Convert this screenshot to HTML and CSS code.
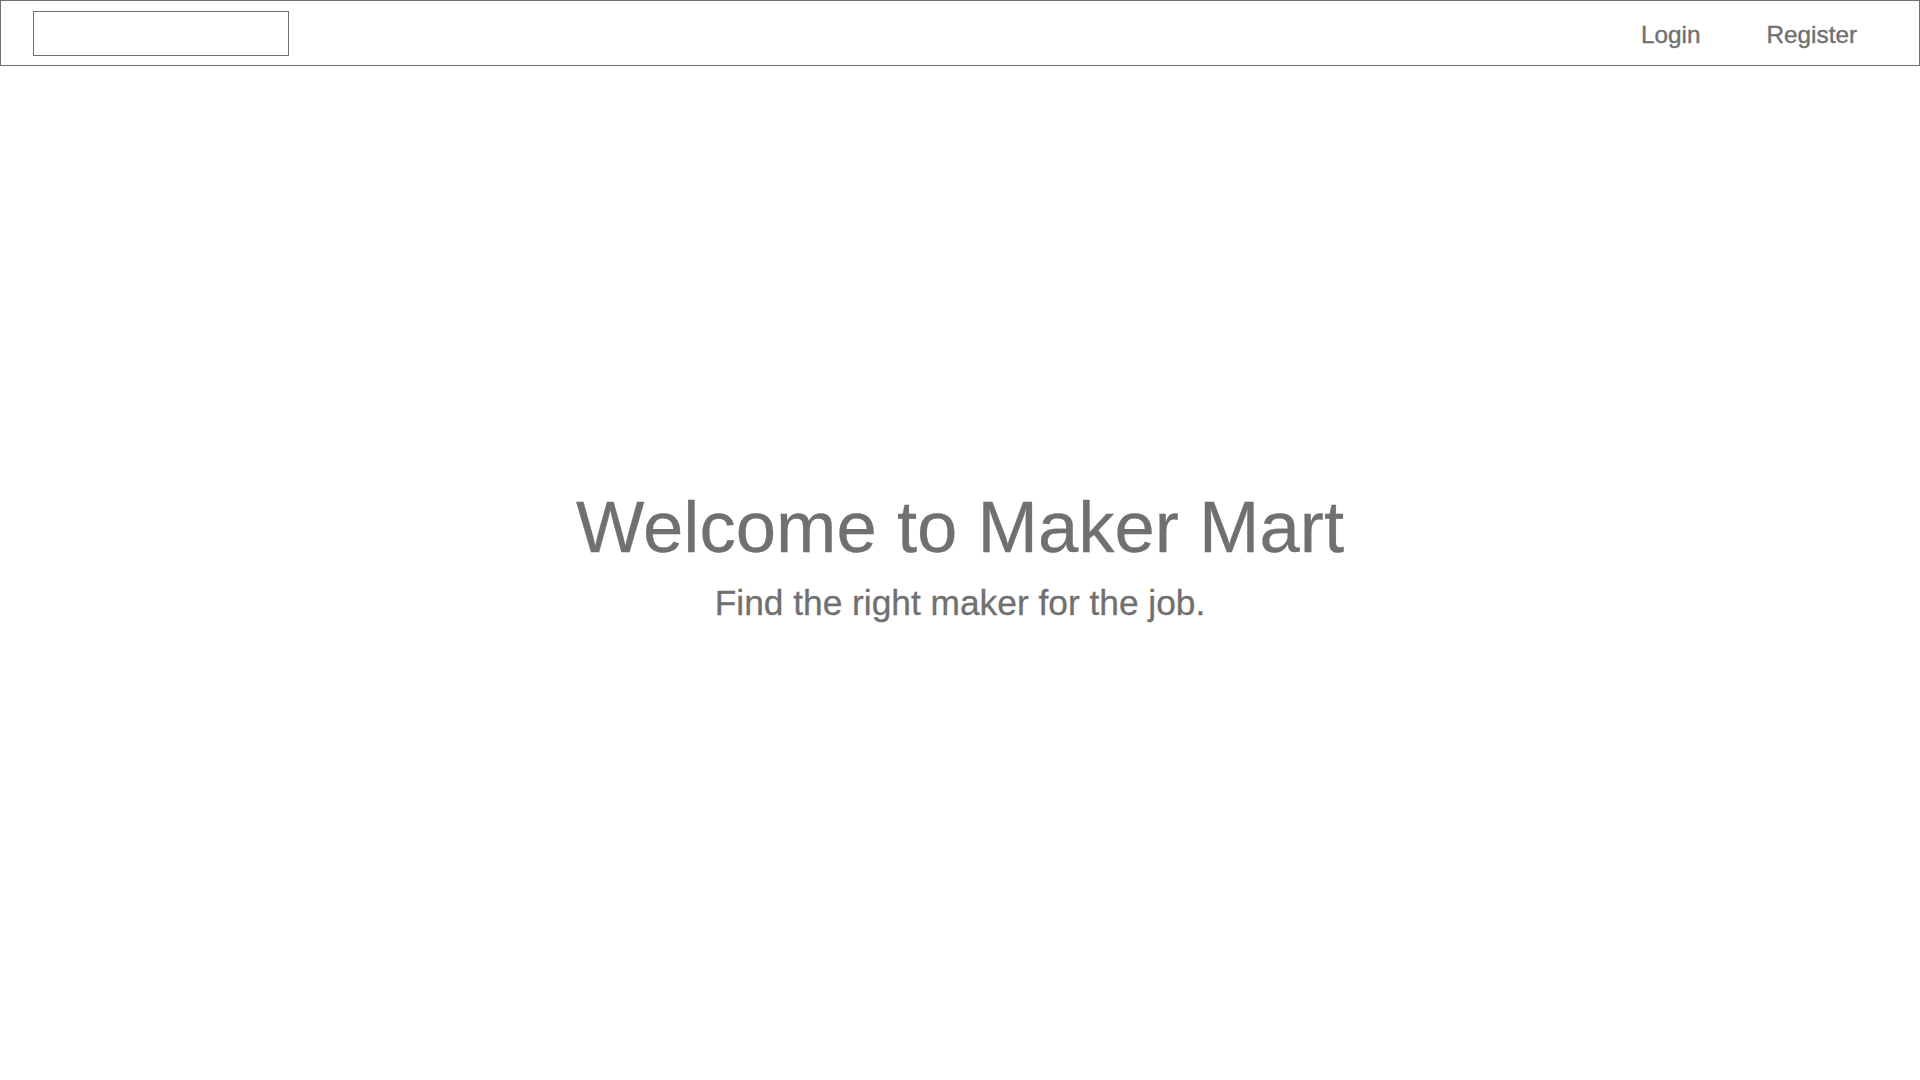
FILE: index.html
```html
<!DOCTYPE html>
<html lang="en">
<head>
<meta charset="utf-8">
<title>Maker Mart</title>
<link rel="stylesheet" href="styles.css">
</head>
<body>
<header class="topbar">
  <input class="search" type="text" aria-label="Search">
  <nav class="nav">
    <a class="nav-link" href="#">Login</a>
    <a class="nav-link" href="#">Register</a>
  </nav>
</header>
<main class="hero">
  <h1 class="hero-title">Welcome to Maker Mart</h1>
  <p class="hero-sub">Find the right maker for the job.</p>
</main>
</body>
</html>
```
FILE: styles.css
```css
* { box-sizing: border-box; }
html, body { margin: 0; padding: 0; background: #ffffff; }
body {
  font-family: "Liberation Sans", Arial, Helvetica, sans-serif;
  color: #707070;
  width: 1920px;
  height: 1080px;
  overflow: hidden;
}
.topbar {
  display: flex;
  justify-content: space-between;
  align-items: flex-start;
  height: 66px;
  border: 1px solid #707070;
  padding: 10px 62px 0 32px;
}
.search {
  width: 256px;
  height: 45px;
  border: 1px solid #707070;
  border-radius: 0;
  margin: 0;
  padding: 0 8px;
  background: #fff;
  outline: none;
}
.nav {
  display: flex;
  gap: 66px;
  padding-top: 10px;
}
.nav-link {
  font-size: 24.3px;
  color: #707070;
  text-decoration: none;
  line-height: normal;
  -webkit-text-stroke: 0.4px #707070;
}
.hero {
  display: flex;
  flex-direction: column;
  align-items: center;
  padding-top: 421px;
}
.hero-title {
  margin: 0;
  font-size: 72.5px;
  line-height: 80px;
  font-weight: 400;
  color: #707070;
  -webkit-text-stroke: 0.3px #707070;
}
.hero-sub {
  margin: 16px 0 0;
  font-size: 35.3px;
  line-height: 40px;
  color: #707070;
  -webkit-text-stroke: 0.3px #707070;
}
```
